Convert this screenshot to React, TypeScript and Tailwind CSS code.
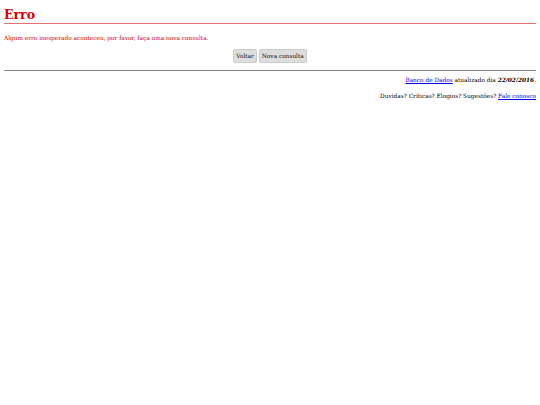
export default function App() {
  return (
    <div className="w-[540px] h-[405px] bg-white px-[4px] pt-[8px] font-['DejaVu_Serif',serif] text-black">
      <h1 className="text-[12.5px] font-bold text-[#dd0000] leading-[14px] pb-[1px]">Erro</h1>
      <div className="h-[1px] bg-[#e57373]" />
      <p className="mt-[10px] text-[5.8px] text-[#dd0000] leading-[8px]">Algum erro inesperado aconteceu, por favor, faça uma nova consulta.</p>
      <div className="mt-[7px] flex justify-center gap-[2px]">
        <button className="bg-[#dddddd] border border-[#cccccc] rounded-[2px] px-[2px] h-[14px] text-[5.8px] leading-[12px] text-[#111]">Voltar</button>
        <button className="bg-[#dddddd] border border-[#cccccc] rounded-[2px] px-[2px] h-[14px] text-[5.8px] leading-[12px] text-[#111]">Nova consulta</button>
      </div>
      <div className="mt-[7px] h-[1px] bg-[#888888]" />
      <p className="mt-[5px] text-right text-[5.8px] leading-[8px]">
        <a className="text-[#0000ee] underline">Banco de Dados</a> atualizado dia <b><i>22/02/2016</i></b>.
      </p>
      <p className="mt-[8px] text-right text-[5.8px] leading-[8px]">
        Duvidas? Críticas? Elogios? Sugestões? <a className="text-[#0000ee] underline">Fale conosco</a>
      </p>
    </div>
  );
}
